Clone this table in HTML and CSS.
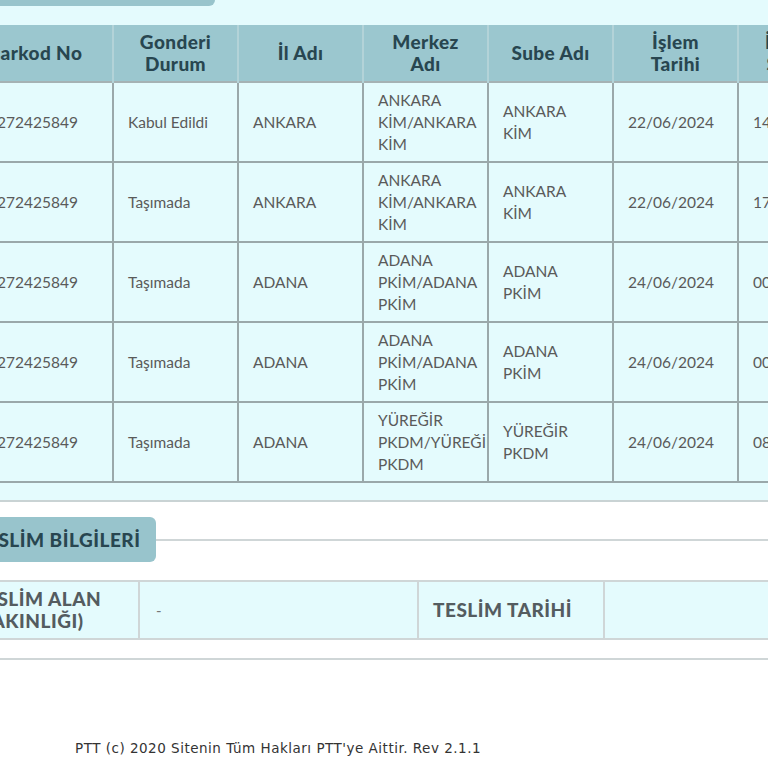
FILE: index.html
```html
<!DOCTYPE html>
<html lang="tr">
<head>
<meta charset="utf-8">
<title>Gönderi Takip</title>
<link rel="stylesheet" href="styles.css">
</head>
<body>
<div class="viewport">
  <section class="panel">
    <div class="top-tab"></div>
    <table class="moves">
      <colgroup>
        <col class="c1"><col class="c"><col class="c"><col class="c"><col class="c"><col class="c"><col class="c7">
      </colgroup>
      <thead>
        <tr>
          <th>Barkod No</th>
          <th>Gonderi<br>Durum</th>
          <th>İl Adı</th>
          <th>Merkez<br>Adı</th>
          <th>Sube Adı</th>
          <th>İşlem<br>Tarihi</th>
          <th>İşlem<br>Saati</th>
        </tr>
      </thead>
      <tbody>
        <tr>
          <td class="code">KP16272425849</td>
          <td>Kabul Edildi</td>
          <td>ANKARA</td>
          <td>ANKARA KİM/ANKARA KİM</td>
          <td>ANKARA KİM</td>
          <td>22/06/2024</td>
          <td>14:21</td>
        </tr>
        <tr>
          <td class="code">KP16272425849</td>
          <td>Taşımada</td>
          <td>ANKARA</td>
          <td>ANKARA KİM/ANKARA KİM</td>
          <td>ANKARA KİM</td>
          <td>22/06/2024</td>
          <td>17:45</td>
        </tr>
        <tr>
          <td class="code">KP16272425849</td>
          <td>Taşımada</td>
          <td>ADANA</td>
          <td>ADANA PKİM/ADANA PKİM</td>
          <td>ADANA PKİM</td>
          <td>24/06/2024</td>
          <td>00:12</td>
        </tr>
        <tr>
          <td class="code">KP16272425849</td>
          <td>Taşımada</td>
          <td>ADANA</td>
          <td>ADANA PKİM/ADANA PKİM</td>
          <td>ADANA PKİM</td>
          <td>24/06/2024</td>
          <td>00:40</td>
        </tr>
        <tr>
          <td class="code">KP16272425849</td>
          <td>Taşımada</td>
          <td>ADANA</td>
          <td>YÜREĞİR PKDM/YÜREĞİR PKDM</td>
          <td>YÜREĞİR PKDM</td>
          <td>24/06/2024</td>
          <td>08:05</td>
        </tr>
      </tbody>
    </table>
  </section>

  <section class="delivery">
    <div class="section-head">
      <div class="tab">TESLİM BİLGİLERİ</div>
      <div class="rule"></div>
    </div>
    <table class="info">
      <colgroup>
        <col class="i1"><col class="i2"><col class="i3"><col class="i4">
      </colgroup>
      <tr>
        <th>TESLİM ALAN<br>(YAKINLIĞI)</th>
        <td>-</td>
        <th>TESLİM TARİHİ</th>
        <td></td>
      </tr>
    </table>
    <div class="bottom-rule"></div>
  </section>

  <footer class="footer">PTT (c) 2020 Sitenin Tüm Hakları PTT'ye Aittir. Rev 2.1.1</footer>
</div>
</body>
</html>
```

FILE: styles.css
```css
html, body {
  margin: 0;
  padding: 0;
  background: #ffffff;
}

.viewport {
  width: 768px;
  height: 768px;
  overflow: hidden;
  font-family: "Lato", "Open Sans", sans-serif;
}

.panel {
  background: #e4fbfd;
  border-bottom: 2px solid #c9d3d4;
  height: 500px;
  overflow: hidden;
}

.top-tab {
  width: 215px;
  height: 6px;
  background: #98c4cc;
  border-bottom-right-radius: 6px;
}

.moves {
  margin-top: 19px;
  margin-left: -44px;
  border-collapse: collapse;
  table-layout: fixed;
  width: 881px;
}

.moves col.c1 { width: 156px; }
.moves col.c { width: 125px; }
.moves col.c7 { width: 100px; }

.moves th {
  background: #9bc7cf;
  color: #284650;
  font-weight: 900;
  font-size: 19px;
  letter-spacing: 0.4px;
  line-height: 22px;
  height: 57px;
  padding: 0 4px;
  text-align: center;
  border-left: 2px solid #b3d3d8;
  box-sizing: border-box;
  white-space: nowrap;
}

.moves td {
  height: 80px;
  padding: 0 20px 0 14px;
  font-size: 15.5px;
  line-height: 22px;
  color: #5a5a5a;
  text-align: left;
  vertical-align: middle;
  border: 2px solid #9aa8aa;
  border-top-color: #a5b2b4;
  box-sizing: border-box;
  overflow: hidden;
}

.moves td.code {
  text-align: right;
  white-space: nowrap;
  padding-right: 34px;
  padding-left: 0;
}

.delivery {
  padding-top: 15px;
}

.section-head {
  display: flex;
  align-items: center;
}

.tab {
  margin-left: -37px;
  background: #98c4cc;
  color: #284650;
  font-weight: 900;
  font-size: 19px;
  height: 45px;
  line-height: 45px;
  padding: 0 16px 0 12px;
  border-radius: 6px;
  white-space: nowrap;
  letter-spacing: 0.5px;
}

.rule {
  flex: 1;
  height: 2px;
  background: #cfd6d7;
}

.info {
  margin-top: 18px;
  margin-left: -42px;
  border-collapse: collapse;
  table-layout: fixed;
  width: 828px;
  border-top: 2px solid #cfd6d7;
  border-bottom: 2px solid #cfd6d7;
}

.info col.i1 { width: 180px; }
.info col.i2 { width: 279px; }
.info col.i3 { width: 186px; }
.info col.i4 { width: 183px; }

.info th, .info td {
  background: #e4fbfd;
  height: 58px;
  box-sizing: border-box;
  border-left: 2px solid #cfd6d7;
  font-size: 15px;
  line-height: 22px;
  text-align: left;
  vertical-align: middle;
  padding: 0 14px;
}

.info th {
  color: #545c60;
  font-weight: 900;
  font-size: 19px;
  letter-spacing: 0.5px;
  white-space: nowrap;
}

.info td {
  color: #777;
  padding-left: 16px;
}

.bottom-rule {
  margin-top: 18px;
  height: 2px;
  background: #cfd6d7;
}

.footer {
  margin-top: 80px;
  padding-left: 75px;
  font-family: "DejaVu Sans", Verdana, sans-serif;
  font-size: 13.5px;
  letter-spacing: 0.5px;
  color: #333;
  line-height: 16px;
}
```
